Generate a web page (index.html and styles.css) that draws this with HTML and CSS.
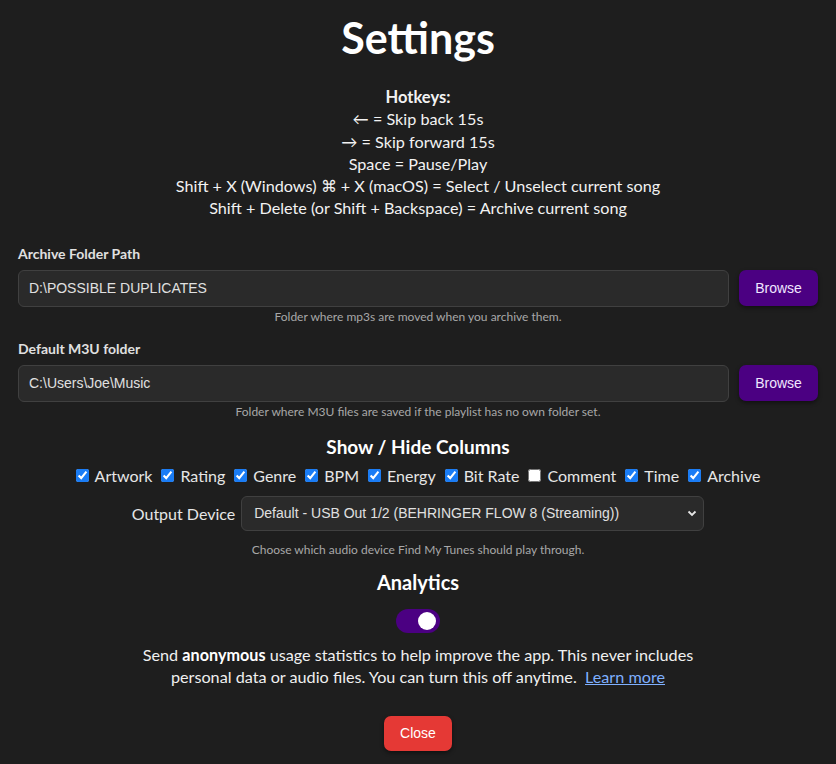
FILE: index.html
```html
<!DOCTYPE html>
<html>
<head>
<meta charset="utf-8">
<link rel="stylesheet" href="styles.css">
</head>
<body>
<div class="settings">
  <h1 class="title">Settings</h1>
  <div class="hotkeys">
    <div class="hk-title">Hotkeys:</div>
    <div>← = Skip back 15s</div>
    <div>→ = Skip forward 15s</div>
    <div>Space = Pause/Play</div>
    <div>Shift + X (Windows) ⌘ + X (macOS) = Select / Unselect current song</div>
    <div>Shift + Delete (or Shift + Backspace) = Archive current song</div>
  </div>

  <div class="field">
    <label class="field-label">Archive Folder Path</label>
    <div class="field-row">
      <input class="text-input" type="text" value="D:\POSSIBLE DUPLICATES">
      <button class="btn btn-browse">Browse</button>
    </div>
    <div class="hint">Folder where mp3s are moved when you archive them.</div>
  </div>

  <div class="field">
    <label class="field-label">Default M3U folder</label>
    <div class="field-row">
      <input class="text-input" type="text" value="C:\Users\Joe\Music">
      <button class="btn btn-browse">Browse</button>
    </div>
    <div class="hint">Folder where M3U files are saved if the playlist has no own folder set.</div>
  </div>

  <h3 class="section-title">Show / Hide Columns</h3>
  <div class="columns">
    <label class="col"><input type="checkbox" checked> Artwork</label>
    <label class="col"><input type="checkbox" checked> Rating</label>
    <label class="col"><input type="checkbox" checked> Genre</label>
    <label class="col"><input type="checkbox" checked> BPM</label>
    <label class="col"><input type="checkbox" checked> Energy</label>
    <label class="col"><input type="checkbox" checked> Bit Rate</label>
    <label class="col"><input type="checkbox"> Comment</label>
    <label class="col"><input type="checkbox" checked> Time</label>
    <label class="col"><input type="checkbox" checked> Archive</label>
  </div>

  <div class="device-row">
    <span class="device-label">Output Device</span>
    <div class="select">
      <span>Default - USB Out 1/2 (BEHRINGER FLOW 8 (Streaming))</span>
      <svg class="chev" width="10" height="7" viewBox="0 0 10 7"><path d="M1.5 1.5 L5 5 L8.5 1.5" fill="none" stroke="#e6e6e6" stroke-width="1.8"/></svg>
    </div>
  </div>
  <div class="hint hint-device">Choose which audio device Find My Tunes should play through.</div>

  <h3 class="section-title analytics-title">Analytics</h3>
  <div class="toggle-wrap">
    <span class="toggle"><span class="knob"></span></span>
  </div>
  <p class="analytics-text">Send <strong>anonymous</strong> usage statistics to help improve the app. This never includes personal data or audio files. You can turn this off anytime. &nbsp;<a href="#" class="link">Learn more</a></p>

  <div class="close-wrap">
    <button class="btn btn-close">Close</button>
  </div>
</div>
</body>
</html>
```

FILE: styles.css
```css
html, body {
  margin: 0;
  padding: 0;
  background: #1e1e1e;
}
body {
  font-family: "Lato", "Noto Sans", sans-serif;
  color: #f0f0f0;
  width: 836px;
  height: 764px;
  overflow: hidden;
}
.settings {
  padding: 0 18px;
  display: flex;
  flex-direction: column;
}
.title {
  margin: 14px 0 0;
  text-align: center;
  font-size: 43px;
  font-weight: 700;
  line-height: 48px;
  color: #ffffff;
}
.hotkeys {
  margin-top: 24px;
  text-align: center;
  font-size: 16.2px;
  line-height: 22.3px;
  color: #f2f2f2;
}
.hk-title {
  font-weight: 700;
  font-size: 16.5px;
}
.field {
  margin-top: 26px;
  display: flex;
  flex-direction: column;
}
.field + .field {
  margin-top: 17px;
}
.field-label {
  font-size: 14px;
  font-weight: 700;
  color: #e0e0e0;
  line-height: 16px;
  margin-bottom: 8px;
}
.field-row {
  display: flex;
  gap: 10px;
  align-items: center;
}
.text-input {
  flex: 1;
  height: 37px;
  box-sizing: border-box;
  background: #2a2a2a;
  border: 1px solid #404040;
  border-radius: 6px;
  color: #e0e0e0;
  font-family: "Liberation Sans", Arial, sans-serif;
  font-size: 14px;
  padding: 0 10px;
  outline: none;
}
.btn {
  font-family: "Liberation Sans", Arial, sans-serif;
  font-size: 14px;
  border: none;
  border-radius: 7px;
  cursor: pointer;
  color: #ffffff;
}
.btn-browse {
  width: 79px;
  height: 36px;
  background: #4b0082;
  color: #f0e6ff;
  box-shadow: 0 2px 4px rgba(0,0,0,0.45);
}
.hint {
  text-align: center;
  font-size: 12px;
  color: #a8a8a8;
  line-height: 14px;
  margin-top: 3px;
}
.section-title {
  margin: 28px 0 0;
  text-align: center;
  font-size: 19px;
  font-weight: 700;
  line-height: 22px;
  color: #ffffff;
}
.field + .section-title {
  margin-top: 17px;
}
.columns {
  display: flex;
  justify-content: center;
  flex-wrap: wrap;
  gap: 0 9px;
  margin-top: 8px;
  font-size: 16px;
  line-height: 20px;
  color: #e6e6e6;
}
.col {
  display: inline-flex;
  align-items: center;
  gap: 2px;
}
.col input {
  margin: 0 4px 0 0;
  width: 13px;
  height: 13px;
  accent-color: #1a7cf5;
}
.device-row {
  display: flex;
  justify-content: center;
  align-items: center;
  gap: 6px;
  margin-top: 10px;
}
.device-label {
  font-size: 16px;
  color: #e6e6e6;
}
.select {
  width: 463px;
  height: 35px;
  box-sizing: border-box;
  background: #2a2a2a;
  border: 1px solid #404040;
  border-radius: 6px;
  display: flex;
  align-items: center;
  justify-content: space-between;
  padding: 0 6px 0 12px;
  font-family: "Liberation Sans", Arial, sans-serif;
  font-size: 14px;
  color: #e0e0e0;
}
.chev {
  display: block;
}
.hint-device {
  margin-top: 12px;
}
.analytics-title {
  margin-top: 14px;
  font-size: 20px;
}
.toggle-wrap {
  display: flex;
  justify-content: center;
  margin-top: 16px;
}
.toggle {
  width: 44px;
  height: 24px;
  border-radius: 12px;
  background: #4b0082;
  position: relative;
  display: block;
}
.knob {
  position: absolute;
  right: 4px;
  top: 3px;
  width: 18px;
  height: 18px;
  border-radius: 50%;
  background: #ffffff;
}
.analytics-text {
  margin: 11px auto 0;
  max-width: 580px;
  text-align: center;
  font-size: 16.2px;
  line-height: 22px;
  color: #f0f0f0;
}
.analytics-text strong {
  font-weight: 700;
  color: #ffffff;
}
.link {
  color: #7fb0ff;
  text-decoration: underline;
}
.close-wrap {
  display: flex;
  justify-content: center;
  margin-top: 28px;
}
.btn-close {
  width: 68px;
  height: 35px;
  background: #e53935;
  box-shadow: 0 2px 4px rgba(0,0,0,0.45);
}
```
